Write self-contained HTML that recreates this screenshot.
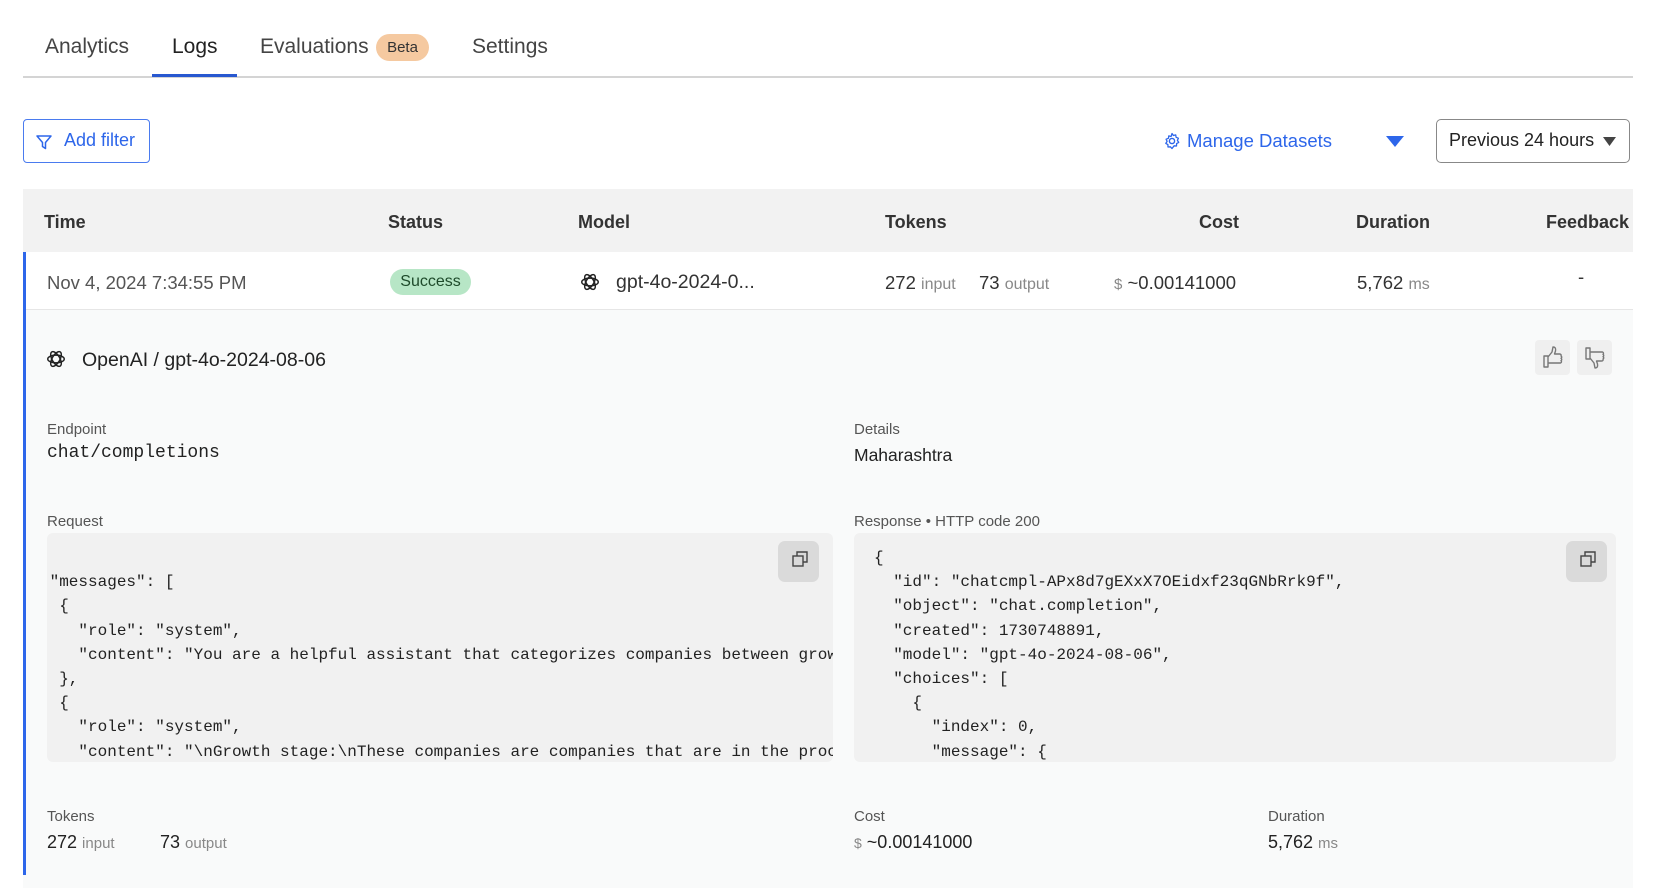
<!DOCTYPE html>
<html><head><meta charset="utf-8"><style>
*{box-sizing:border-box;margin:0;padding:0}
body{width:1668px;height:888px;overflow:hidden;background:#fff;font-family:"Liberation Sans",sans-serif;color:#222;position:relative}
.a{position:absolute;white-space:nowrap}
.tab{font-size:21px;color:#444;top:35px}
.hd{font-size:18px;font-weight:bold;color:#333;top:212px}
.cell{font-size:18.5px;color:#333;top:272px}
.mut{color:#888;font-size:16px}
.lbl{font-size:15px;color:#555}
pre{font-family:"Liberation Mono",monospace;font-size:16px;line-height:24.2px;color:#222}
.box{position:absolute;background:#f1f1f1;border-radius:6px;overflow:hidden;top:533px;height:229px}
.cp{position:absolute;width:41px;height:41px;background:#dadada;border-radius:7px}
.tb{position:absolute;width:35px;height:35px;background:#efefef;border-radius:4px;top:340px}
</style></head><body>
<svg width="0" height="0" style="position:absolute"><defs><g id="oai" fill="none" stroke="#222" stroke-width="1.6"><ellipse cx="12" cy="12" rx="9" ry="4.2"/><ellipse cx="12" cy="12" rx="9" ry="4.2" transform="rotate(60 12 12)"/><ellipse cx="12" cy="12" rx="9" ry="4.2" transform="rotate(120 12 12)"/></g></defs></svg>
<div class="a tab" style="left:45px">Analytics</div>
<div class="a tab" style="left:172px;color:#222">Logs</div>
<div class="a tab" style="left:260px">Evaluations</div>
<div class="a" style="left:376px;top:34px;width:53px;height:27px;border-radius:14px;background:#f5c9a0;font-size:15px;color:#333;text-align:center;line-height:27px">Beta</div>
<div class="a tab" style="left:472px">Settings</div>
<div class="a" style="left:23px;top:76px;width:1610px;height:2px;background:#d4d4d4"></div>
<div class="a" style="left:152px;top:74px;width:85px;height:3px;background:#2858d0"></div>

<div class="a" style="left:23px;top:119px;width:127px;height:44px;border:1.5px solid #4a7bef;border-radius:4px;color:#2d66ea;font-size:18px;line-height:41px;padding-left:40px">Add filter</div>
<svg class="a" style="left:35px;top:133px" width="18" height="18" viewBox="0 0 18 18"><path d="M2 3h14l-5.5 6.5v6l-3-2v-4z" fill="none" stroke="#2d66ea" stroke-width="1.5" stroke-linejoin="round"/></svg>

<svg class="a" style="left:1163px;top:132px" width="18" height="18" viewBox="0 0 18 18"><circle cx="9" cy="9" r="2.6" fill="none" stroke="#2d66ea" stroke-width="1.4"/><path d="M9 1.5l1.4 2 2.3-.6.4 2.4 2.3.9-1 2.2 1.3 2-2.1 1.2-.1 2.4-2.4-.2L9 16.5l-1.6-1.7-2.4.2-.1-2.4-2.1-1.2 1.3-2-1-2.2 2.3-.9.4-2.4 2.3.6z" fill="none" stroke="#2d66ea" stroke-width="1.3" stroke-linejoin="round"/></svg>
<div class="a" style="left:1187px;top:130px;font-size:18.5px;color:#2d66ea">Manage Datasets</div>
<svg class="a" style="left:1386px;top:136px" width="18" height="12"><path d="M0 0h18l-9 11z" fill="#2d66ea"/></svg>
<div class="a" style="left:1436px;top:119px;width:194px;height:44px;border:1.5px solid #888;border-radius:5px;font-size:18px;line-height:41px;padding-left:12px;color:#222">Previous 24 hours</div>
<svg class="a" style="left:1603px;top:137px" width="13" height="10"><path d="M0 0h13l-6.5 9z" fill="#444"/></svg>

<div class="a" style="left:23px;top:189px;width:1610px;height:63px;background:#f2f2f2"></div>
<div class="a hd" style="left:44px">Time</div>
<div class="a hd" style="left:388px">Status</div>
<div class="a hd" style="left:578px">Model</div>
<div class="a hd" style="left:885px">Tokens</div>
<div class="a hd" style="left:1199px">Cost</div>
<div class="a hd" style="left:1356px">Duration</div>
<div class="a hd" style="left:1546px">Feedback</div>

<div class="a" style="left:23px;top:309px;width:1610px;height:1px;background:#e6e6e6"></div>
<div class="a" style="left:23px;top:310px;width:1610px;height:578px;background:#f9fafa"></div>
<div class="a" style="left:23px;top:252px;width:3px;height:623px;background:#2d66ea"></div>

<div class="a cell" style="left:47px;color:#555">Nov 4, 2024 7:34:55 PM</div>
<div class="a" style="left:390px;top:269px;width:81px;height:26px;border-radius:13px;background:#b7e6c6;color:#1e4a2a;font-size:16px;text-align:center;line-height:26px">Success</div>
<svg class="a" style="left:579px;top:271px" width="22" height="22" viewBox="0 0 24 24"><use href="#oai"/></svg>
<div class="a cell" style="left:616px;font-size:19.5px;top:271px">gpt-4o-2024-0...</div>
<div class="a cell" style="left:885px">272 <span class="mut">input</span></div>
<div class="a cell" style="left:979px">73 <span class="mut">output</span></div>
<div class="a cell" style="left:1114px"><span class="mut" style="font-size:15px">$</span> ~0.00141000</div>
<div class="a cell" style="left:1357px">5,762 <span class="mut">ms</span></div>
<div class="a cell" style="left:1578px;top:266px">-</div>

<svg class="a" style="left:45px;top:348px" width="22" height="22" viewBox="0 0 24 24"><use href="#oai"/></svg>
<div class="a" style="left:82px;top:349px;font-size:19.5px;color:#222">OpenAI / gpt-4o-2024-08-06</div>
<div class="tb" style="left:1535px"><svg width="35" height="35" viewBox="0 0 35 35"><path d="M9 16h4v11H9zM13 17l4-5 1-5c2 0 3 1 2.5 4l-1 3h5c1.5 0 2 1 1.5 2 1 .5 1 1.8 0 2.3 1 .5 1 1.8 0 2.3.8.6.6 2-.5 2.4H13" fill="none" stroke="#777" stroke-width="1.4" stroke-linejoin="round"/></svg></div>
<div class="tb" style="left:1577px"><svg width="35" height="35" viewBox="0 0 35 35"><path d="M9 8h4v11H9zM13 18l4 5 1 5c2 0 3-1 2.5-4l-1-3h5c1.5 0 2-1 1.5-2 1-.5 1-1.8 0-2.3 1-.5 1-1.8 0-2.3.8-.6.6-2-.5-2.4H13" fill="none" stroke="#777" stroke-width="1.4" stroke-linejoin="round"/></svg></div>

<div class="a lbl" style="left:47px;top:421px">Endpoint</div>
<div class="a" style="left:47px;top:443px;font-family:'Liberation Mono',monospace;font-size:18px;color:#222">chat/completions</div>
<div class="a lbl" style="left:854px;top:421px">Details</div>
<div class="a" style="left:854px;top:445px;font-size:17.5px;color:#222">Maharashtra</div>

<div class="a lbl" style="left:47px;top:513px">Request</div>
<div class="a lbl" style="left:854px;top:513px">Response • HTTP code 200</div>

<div class="box" style="left:47px;width:786px">
<pre style="position:absolute;left:-7px;top:13px">

 "messages": [
  {
    "role": "system",
    "content": "You are a helpful assistant that categorizes companies between growth stage
  },
  {
    "role": "system",
    "content": "\nGrowth stage:\nThese companies are companies that are in the process</pre>
<div class="cp" style="left:731px;top:8px"><svg width="41" height="41"><rect x="15" y="15" width="10" height="10" fill="none" stroke="#444" stroke-width="1.4"/><path d="M19 15v-4h10v10h-4" fill="none" stroke="#444" stroke-width="1.4"/></svg></div>
</div>
<div class="box" style="left:854px;width:762px">
<pre style="position:absolute;left:20px;top:13px">{
  "id": "chatcmpl-APx8d7gEXxX7OEidxf23qGNbRrk9f",
  "object": "chat.completion",
  "created": 1730748891,
  "model": "gpt-4o-2024-08-06",
  "choices": [
    {
      "index": 0,
      "message": {</pre>
<div class="cp" style="left:712px;top:8px"><svg width="41" height="41"><rect x="15" y="15" width="10" height="10" fill="none" stroke="#444" stroke-width="1.4"/><path d="M19 15v-4h10v10h-4" fill="none" stroke="#444" stroke-width="1.4"/></svg></div>
</div>

<div class="a lbl" style="left:47px;top:808px">Tokens</div>
<div class="a" style="left:47px;top:832px;font-size:18px">272 <span class="mut" style="font-size:15px">input</span></div>
<div class="a" style="left:160px;top:832px;font-size:18px">73 <span class="mut" style="font-size:15px">output</span></div>
<div class="a lbl" style="left:854px;top:808px">Cost</div>
<div class="a" style="left:854px;top:832px;font-size:18px"><span class="mut" style="font-size:14px">$</span> ~0.00141000</div>
<div class="a lbl" style="left:1268px;top:808px">Duration</div>
<div class="a" style="left:1268px;top:832px;font-size:18px">5,762 <span class="mut" style="font-size:15px">ms</span></div>
</body></html>
